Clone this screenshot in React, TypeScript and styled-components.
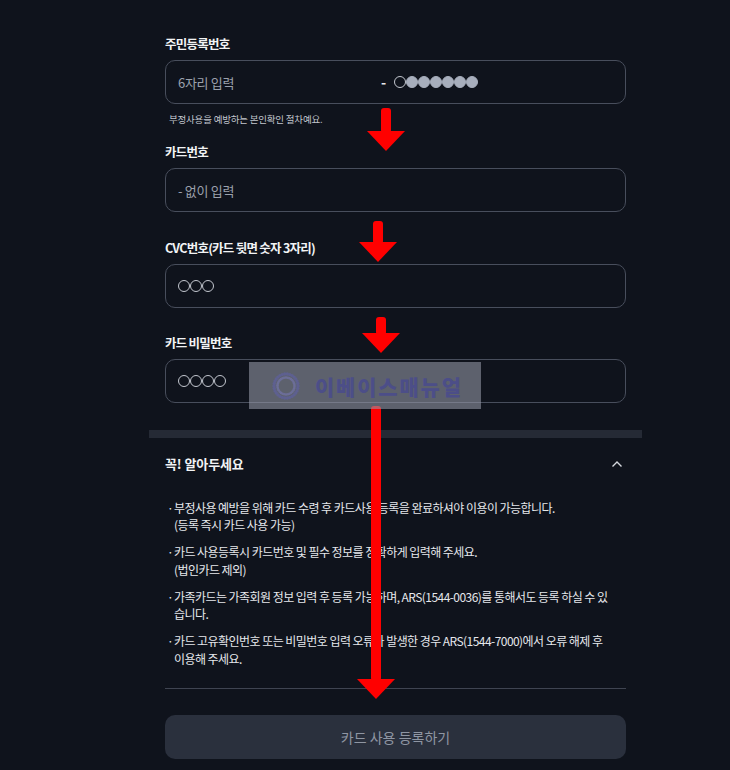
import React from 'react';
import styled, { createGlobalStyle } from 'styled-components';

const GlobalStyle = createGlobalStyle`
  html, body {
    margin: 0;
    padding: 0;
    background: #0f131c;
  }
  * { box-sizing: border-box; }
`;

const FONT = `"Noto Sans CJK KR", "Noto Sans", sans-serif`;

// 화면 위에 겹쳐진 빨간 화살표 위치
const arrows = [
  { left: 367, top: 108, length: 43 },
  { left: 359, top: 221, length: 41 },
  { left: 362, top: 317, length: 36 },
  { left: 357, top: 406, length: 293 },
];

const notices = [
  ['부정사용 예방을 위해 카드 수령 후 카드사용 등록을 완료하셔야 이용이 가능합니다.', '(등록 즉시 카드 사용 가능)'],
  ['카드 사용등록시 카드번호 및 필수 정보를 정확하게 입력해 주세요.', '(법인카드 제외)'],
  ['가족카드는 가족회원 정보 입력 후 등록 가능하며, ARS(1544-0036)를 통해서도 등록 하실 수 있', '습니다.'],
  ['카드 고유확인번호 또는 비밀번호 입력 오류가 발생한 경우 ARS(1544-7000)에서 오류 해제 후', '이용해 주세요.'],
];

export default function App() {
  return (
    <Page>
      <GlobalStyle />
      <Column>
        <Field>
          <Label>주민등록번호</Label>
          <InputBox>
            <Placeholder $width={203}>6자리 입력</Placeholder>
            <Dash>-</Dash>
            <Dots>
              <Dot />
              {[0, 1, 2, 3, 4, 5].map((i) => (
                <Dot key={i} $filled />
              ))}
            </Dots>
          </InputBox>
          <Helper>부정사용을 예방하는 본인확인 절차예요.</Helper>
        </Field>

        <Field>
          <Label>카드번호</Label>
          <InputBox>
            <Placeholder>- 없이 입력</Placeholder>
          </InputBox>
        </Field>

        <Field>
          <Label>CVC번호(카드 뒷면 숫자 3자리)</Label>
          <InputBox>
            <Dots>
              {[0, 1, 2].map((i) => (
                <Dot key={i} />
              ))}
            </Dots>
          </InputBox>
        </Field>

        <Field>
          <Label>카드 비밀번호</Label>
          <InputBox>
            <Dots>
              {[0, 1, 2, 3].map((i) => (
                <Dot key={i} />
              ))}
            </Dots>
          </InputBox>
        </Field>

        <Band />

        <NoticeHead>
          <NoticeTitle>꼭! 알아두세요</NoticeTitle>
          <svg width="12" height="8" viewBox="0 0 12 8">
            <path d="M1.5 6.5 L6 2 L10.5 6.5" fill="none" stroke="#d6d9df" strokeWidth="1.4" />
          </svg>
        </NoticeHead>

        <NoticeList>
          {notices.map((lines, i) => (
            <NoticeItem key={i}>
              <Bullet>·</Bullet>
              <NoticeText>
                {lines.map((l, j) => (
                  <span key={j}>{l}</span>
                ))}
              </NoticeText>
            </NoticeItem>
          ))}
        </NoticeList>

        <Rule />

        <SubmitButton type="button">카드 사용 등록하기</SubmitButton>
      </Column>

      {arrows.map((a, i) => (
        <Arrow key={i} $left={a.left} $top={a.top} width="38" height={a.length} viewBox={`0 0 38 ${a.length}`}>
          <rect x="14" y="0" width="10" height={a.length - 18} rx="3" fill="#ff0000" />
          <polygon points={`0,${a.length - 20} 38,${a.length - 20} 19,${a.length}`} fill="#ff0000" />
        </Arrow>
      ))}

      <Watermark>
        <svg width="30" height="30" viewBox="0 0 30 30">
          {Array.from({ length: 30 }).map((_, i) => {
            const ang = (i / 30) * Math.PI * 2;
            return (
              <g key={i}>
                <circle cx={15 + Math.cos(ang) * 12} cy={15 + Math.sin(ang) * 12} r="1.7" fill="#5e6090" />
                <circle cx={15 + Math.cos(ang + 0.1) * 8.5} cy={15 + Math.sin(ang + 0.1) * 8.5} r="1.3" fill="#6c6e98" />
              </g>
            );
          })}
        </svg>
        <WatermarkText>이베이스매뉴얼</WatermarkText>
      </Watermark>
    </Page>
  );
}

const Page = styled.div`
  position: relative;
  width: 730px;
  height: 770px;
  overflow: hidden;
  background: #0f131c;
  font-family: ${FONT};
  color: #e8eaee;
`;

const Column = styled.div`
  margin-left: 165px;
  width: 461px;
  padding-top: 35px;
  display: flex;
  flex-direction: column;
`;

const Field = styled.div`
  display: flex;
  flex-direction: column;
  margin-bottom: 26.5px;

  &:first-child {
    margin-bottom: 17px;
  }
`;

const Label = styled.div`
  font-size: 12.5px;
  font-weight: 700;
  line-height: 18px;
  letter-spacing: -0.75px;
  color: #f2f3f5;
  margin-bottom: 7px;
`;

const InputBox = styled.div`
  height: 44px;
  border: 1px solid #484e5c;
  border-radius: 10px;
  background: #0f131c;
  display: flex;
  align-items: center;
  padding: 0 12px;
`;

const Placeholder = styled.span<{ $width?: number }>`
  font-size: 13px;
  letter-spacing: -0.3px;
  color: #9ba1ac;
  ${(p) => (p.$width ? `width: ${p.$width}px;` : '')}
`;

const Dash = styled.span`
  font-size: 14px;
  font-weight: 700;
  color: #e6e8ec;
  margin-right: 8px;
`;

const Dots = styled.span`
  display: flex;
`;

const Dot = styled.span<{ $filled?: boolean }>`
  width: 12px;
  height: 12px;
  border-radius: 50%;
  border: 1px solid ${(p) => (p.$filled ? '#a7aebc' : '#c3c7cf')};
  background: ${(p) => (p.$filled ? '#a7aebc' : 'transparent')};
`;

const Helper = styled.div`
  font-size: 9.5px;
  letter-spacing: -0.2px;
  line-height: 14px;
  color: #c2c6ce;
  margin-top: 8px;
  padding-left: 4px;
`;

const Band = styled.div`
  height: 8px;
  margin: 0 -16px;
  background: #252a35;
`;

const NoticeHead = styled.div`
  display: flex;
  align-items: center;
  justify-content: space-between;
  margin-top: 17px;
  padding-right: 3px;
`;

const NoticeTitle = styled.div`
  font-size: 13px;
  font-weight: 700;
  line-height: 18px;
  letter-spacing: -0.1px;
  color: #f2f3f5;
`;

const NoticeList = styled.div`
  display: flex;
  flex-direction: column;
  gap: 9.5px;
  margin-top: 26px;
`;

const NoticeItem = styled.div`
  display: flex;
`;

const Bullet = styled.span`
  width: 9px;
  padding-left: 2px;
  font-size: 12px;
  line-height: 17.5px;
  color: #e6e8ec;
`;

const NoticeText = styled.div`
  display: flex;
  flex-direction: column;
  font-size: 12px;
  line-height: 17.5px;
  letter-spacing: -0.55px;
  color: #e6e8ec;
  white-space: nowrap;
`;

const Rule = styled.div`
  height: 1px;
  background: #3f4451;
  margin-top: 21px;
`;

const SubmitButton = styled.button`
  margin-top: 26px;
  height: 44px;
  border: none;
  border-radius: 10px;
  background: #2a303d;
  color: #8f96a3;
  font-family: ${FONT};
  font-size: 14px;
  letter-spacing: 0;
`;

const Arrow = styled.svg<{ $left: number; $top: number }>`
  position: absolute;
  left: ${(p) => p.$left}px;
  top: ${(p) => p.$top}px;
`;

const Watermark = styled.div`
  position: absolute;
  left: 249px;
  top: 362px;
  width: 232px;
  height: 47px;
  background: rgba(150, 154, 168, 0.58);
  display: flex;
  align-items: center;
  padding-left: 22px;
  gap: 14px;
`;

const WatermarkText = styled.span`
  font-size: 21px;
  font-weight: 900;
  letter-spacing: 1.8px;
  color: #4c4e88;
`;
